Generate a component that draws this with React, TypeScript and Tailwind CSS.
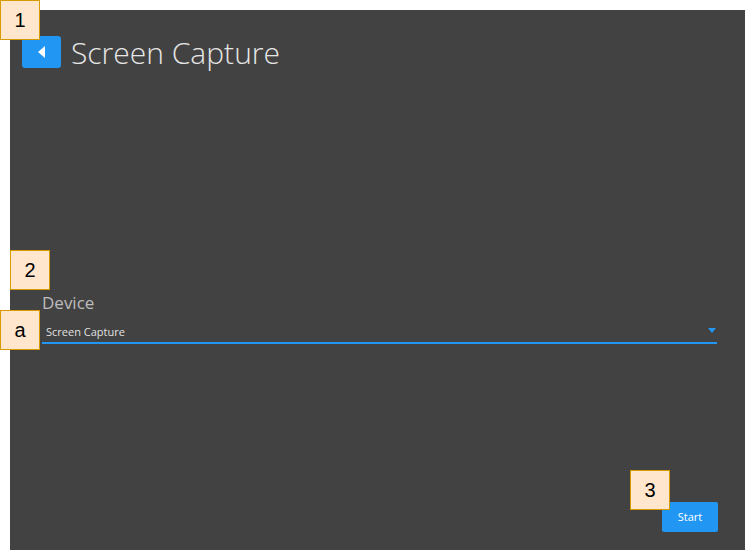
const Callout = ({ label, className }: { label: string; className: string }) => (
    <div
        className={`absolute w-[40px] h-[40px] bg-[#ffe6cc] border border-[#d79b00] flex items-center justify-center text-[20px] text-black font-['Liberation_Sans',Arial,sans-serif] ${className}`}
    >
        {label}
    </div>
);

const App = () => {
    return (
        <div className="relative w-[747px] h-[550px] bg-white overflow-hidden font-['Open_Sans','Noto_Sans',sans-serif]">
            <div className="ml-[10px] mt-[10px] w-[735px] h-[540px] bg-[#424242] flex flex-col">
                {/* header */}
                <div className="flex items-center pt-[25px] pl-[12px] gap-[10px]">
                    <button className="w-[39px] h-[32px] rounded-[3px] bg-[#2196f3] flex items-center justify-center">
                        <svg width="8" height="12" viewBox="0 0 8 12">
                            <path d="M7 0 L0 6 L7 12 Z" fill="#ffffff" />
                        </svg>
                    </button>
                    <h1 className="text-[30px] font-light text-[#e6e6e6] leading-none mt-[3px] tracking-[0px]">
                        Screen Capture
                    </h1>
                </div>

                {/* device select */}
                <div className="mt-[224px] pl-[32px] pr-[28px]">
                    <div className="text-[17px] text-[#bdbdbd] leading-[22px]">Device</div>
                    <div className="mt-[10px] flex items-center justify-between pl-[4px] pr-[1px] h-[20px] border-b-2 border-[#2196f3]">
                        <span className="text-[11px] text-[#e0e0e0] leading-none -mt-[4px]">Screen Capture</span>
                        <svg width="8" height="5" viewBox="0 0 8 5" className="-mt-[6px]">
                            <path d="M0 0 L8 0 L4 5 Z" fill="#2196f3" />
                        </svg>
                    </div>
                </div>

                {/* footer */}
                <div className="mt-auto flex justify-end pr-[27px] pb-[18px]">
                    <button className="w-[56px] h-[30px] rounded-[2px] bg-[#2196f3] text-white text-[11px]">
                        Start
                    </button>
                </div>
            </div>

            <Callout label="1" className="left-0 top-0" />
            <Callout label="2" className="left-[10px] top-[250px]" />
            <Callout label="a" className="left-0 top-[310px]" />
            <Callout label="3" className="left-[630px] top-[470px]" />
        </div>
    );
};

export default App;
